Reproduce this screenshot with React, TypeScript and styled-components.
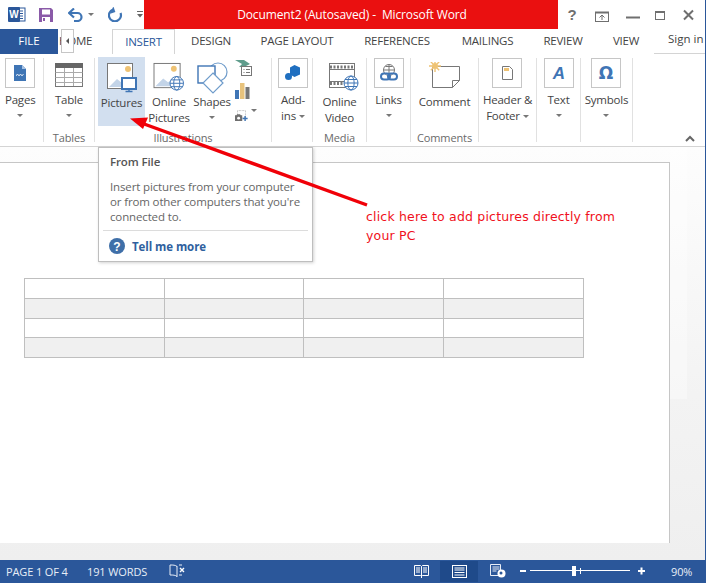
import React from "react";
import styled, { createGlobalStyle } from "styled-components";

const BLUE = "#2b579a";
const ICON_BLUE = "#3f75b5";

const Global = createGlobalStyle`
  html, body { margin: 0; padding: 0; background: #fff; }
  body { font-family: "Open Sans", "Liberation Sans", sans-serif; }
`;

const Frame = styled.div`
  position: relative;
  width: 705px;
  height: 583px;
  border-right: 1px solid ${BLUE};
  display: flex;
  flex-direction: column;
  overflow: hidden;
  background: #fff;
`;

const TitleBar = styled.div`
  height: 29px;
  display: flex;
  flex: none;
`;

const QuickAccess = styled.div`
  width: 144px;
  display: flex;
  align-items: center;
  padding-left: 8px;
  box-sizing: border-box;
`;

const QuickIcon = styled.span<{ $w: number }>`
  width: ${(p) => p.$w}px;
  display: flex;
  align-items: center;
`;

const RedTitle = styled.div`
  width: 414px;
  background: #ea1010;
  color: #fff;
  font-size: 12px;
  letter-spacing: -0.12px;
  white-space: pre;
  display: flex;
  align-items: center;
  justify-content: center;
  padding-left: 2px;
  box-sizing: border-box;
`;

const WindowControls = styled.div`
  flex: 1;
  display: flex;
  align-items: center;
`;

const TabRow = styled.div`
  position: relative;
  height: 25px;
  display: flex;
  flex: none;
  box-sizing: border-box;
  border-bottom: 1px solid #d4d4d4;
`;

const FileTab = styled.div`
  width: 58px;
  height: 25px;
  padding-bottom: 2px;
  box-sizing: border-box;
  background: ${BLUE};
  color: #fff;
  font-size: 11.5px;
  display: flex;
  align-items: center;
  justify-content: center;
`;

const Tab = styled.div<{ $w: number; $active?: boolean }>`
  width: ${(p) => p.$w}px;
  height: 25px;
  padding-bottom: 2px;
  box-sizing: border-box;
  font-size: 11.5px;
  letter-spacing: -0.22px;
  color: ${(p) => (p.$active ? BLUE : "#444")};
  background: #fff;
  display: flex;
  align-items: center;
  justify-content: center;
  ${(p) =>
    p.$active
      ? "border: 1px solid #d4d4d4; border-bottom: none; position: relative; z-index: 1;"
      : ""}
`;

const HomeTab = styled(Tab)`
  justify-content: flex-start;
  padding-left: 1px;
`;

const ScrollButton = styled.div`
  position: absolute;
  left: 61px;
  top: 0;
  width: 13px;
  height: 24px;
  box-sizing: border-box;
  background: #fff;
  border: 1px solid #c6c6c6;
  display: flex;
  align-items: center;
  justify-content: center;
  &::before {
    content: "";
    border-right: 3px solid #555;
    border-top: 3px solid transparent;
    border-bottom: 3px solid transparent;
  }
`;

const SignIn = styled.div`
  margin-left: 14px;
  font-size: 11.5px;
  color: #444;
  white-space: nowrap;
  padding-top: 2px;
`;

const Ribbon = styled.div`
  position: relative;
  height: 93px;
  flex: none;
  box-sizing: border-box;
  border-bottom: 1px solid #d4d4d4;
  display: flex;
  padding-top: 4px;
`;

const Group = styled.div<{ $w: number }>`
  width: ${(p) => p.$w}px;
  height: 84px;
  box-sizing: border-box;
  flex: none;
  display: flex;
  flex-direction: column;
  border-right: 1px solid #e1e1e1;
`;

const GroupBody = styled.div<{ $pad?: number }>`
  height: 73px;
  flex: none;
  display: flex;
  justify-content: ${(p) => (p.$pad !== undefined ? "flex-start" : "center")};
  padding-left: ${(p) => p.$pad ?? 0}px;
`;

const GroupLabel = styled.div`
  height: 11px;
  font-size: 11px;
  line-height: 14px;
  letter-spacing: -0.12px;
  color: #6a6a6a;
  text-align: center;
`;

const RibbonButton = styled.div<{ $w?: number; $on?: boolean }>`
  width: ${(p) => (p.$w ? `${p.$w}px` : "auto")};
  height: 69px;
  margin-top: -1px;
  padding-top: 5px;
  box-sizing: border-box;
  flex: none;
  display: flex;
  flex-direction: column;
  align-items: center;
  background: ${(p) => (p.$on ? "#d2dfef" : "transparent")};
`;

const BoxButton = styled.div`
  display: flex;
  flex-direction: column;
  align-items: center;
`;

const IconBox = styled.div`
  width: 30px;
  height: 30px;
  box-sizing: border-box;
  border: 1px solid #c6c6c6;
  display: flex;
  align-items: center;
  justify-content: center;
  flex: none;
`;

const Label = styled.div<{ $first?: boolean }>`
  font-size: 11.5px;
  line-height: 16px;
  letter-spacing: -0.22px;
  color: #444;
  white-space: nowrap;
  display: flex;
  align-items: center;
  justify-content: center;
  margin-top: ${(p) => (p.$first ? "2px" : "0")};
`;

const BoxLabel = styled(Label)<{ $first?: boolean }>`
  margin-top: ${(p) => (p.$first ? "4px" : "0")};
`;

const Caret = styled.span<{ $inline?: boolean }>`
  display: block;
  width: 0;
  height: 0;
  border-left: 3px solid transparent;
  border-right: 3px solid transparent;
  border-top: 3px solid #777;
  margin: ${(p) => (p.$inline ? "1px 0 0 3px" : "6px 0 0 0")};
`;

const SmallStack = styled.div`
  width: 22px;
  margin-left: 4px;
  display: flex;
  flex-direction: column;
  gap: 6px;
  padding-top: 2px;
`;

const CameraRow = styled.div`
  display: flex;
  align-items: flex-start;
  margin-top: 3px;
`;

const Collapse = styled.div`
  position: absolute;
  right: 10px;
  bottom: 4px;
  line-height: 0;
`;

const DocArea = styled.div`
  flex: 1;
  min-height: 0;
  background: linear-gradient(#fdfdfd, #f3f3f3 60%, #efefef);
  padding-top: 15px;
  display: flex;
  flex-direction: column;
  box-sizing: border-box;
`;

const Page = styled.div`
  width: 670px;
  height: 381px;
  box-sizing: border-box;
  background: #fff;
  border-top: 1px solid #c6c6c6;
  border-right: 1px solid #c6c6c6;
  padding: 115px 0 0 24px;
`;

const ScrollThumb = styled.div`
  position: absolute;
  left: 670px;
  top: 147px;
  width: 17px;
  height: 252px;
  background: rgba(255, 255, 255, 0.35);
`;

const DocTable = styled.table`
  border-collapse: collapse;
  table-layout: fixed;
  width: 559px;
`;

const DocCol = styled.col<{ $w: number }>`
  width: ${(p) => p.$w}px;
`;

const DocRow = styled.tr<{ $band?: boolean }>`
  background: ${(p) => (p.$band ? "#f0f0f0" : "#fff")};
`;

const DocCell = styled.td`
  border: 1px solid #bfbfbf;
  height: 18.8px;
  padding: 0;
`;

const StatusBar = styled.div`
  height: 23px;
  flex: none;
  background: ${BLUE};
  color: #e8eef7;
  font-size: 11px;
  letter-spacing: -0.12px;
  display: flex;
  align-items: center;
  padding-left: 6px;
  padding-bottom: 1px;
  box-sizing: border-box;
`;

const StatusText = styled.span<{ $w: number }>`
  width: ${(p) => p.$w}px;
  white-space: nowrap;
`;

const StatusRight = styled.div`
  margin-left: auto;
  display: flex;
  align-items: center;
  height: 100%;
`;

const ViewButton = styled.div<{ $w: number; $on?: boolean }>`
  width: ${(p) => p.$w}px;
  height: 21px;
  display: flex;
  align-items: center;
  justify-content: center;
  background: ${(p) => (p.$on ? "#1f4a8a" : "transparent")};
`;

const Zoomer = styled.div`
  width: 138px;
  margin-left: 3px;
  line-height: 0;
`;

const ZoomValue = styled.span`
  width: 47px;
  padding-left: 13px;
  box-sizing: border-box;
`;

const Tooltip = styled.div`
  position: absolute;
  left: 98px;
  top: 147px;
  width: 215px;
  height: 115px;
  box-sizing: border-box;
  background: #fff;
  border: 1px solid #bebebe;
  box-shadow: 1px 1px 3px rgba(0, 0, 0, 0.18);
  padding: 6px 4px 0;
`;

const TipTitle = styled.div`
  font-size: 11.5px;
  font-weight: 600;
  letter-spacing: -0.12px;
  line-height: 16px;
  color: #555;
  padding-left: 7px;
`;

const TipBody = styled.div`
  margin-top: 9px;
  padding-left: 7px;
  font-size: 11.5px;
  letter-spacing: -0.14px;
  line-height: 15px;
  color: #666;
  white-space: nowrap;
`;

const TipMore = styled.div`
  margin-top: 6px;
  padding: 7px 0 0 6px;
  border-top: 1px solid #dcdcdc;
  display: flex;
  align-items: center;
  gap: 7px;
  font-size: 11.5px;
  font-weight: 700;
  letter-spacing: -0.08px;
  color: #2f5f9e;
`;

const ArrowLayer = styled.svg`
  position: absolute;
  left: 0;
  top: 0;
  pointer-events: none;
`;

const Note = styled.div`
  position: absolute;
  left: 366px;
  top: 207px;
  font-family: "DejaVu Sans", sans-serif;
  font-size: 12.5px;
  line-height: 19px;
  letter-spacing: 0.18px;
  color: #f01020;
  white-space: nowrap;
`;

const WordIcon = () => (
  <svg width="18" height="17" viewBox="0 0 18 17">
    <rect x="7" y="2" width="10" height="13" fill="#fff" stroke="#2b579a" />
    <path d="M10 5h5M10 7.5h5M10 10h5M10 12.5h5" stroke="#2b579a" />
    <rect x="0" y="1" width="12" height="15" rx="1" fill="#2b579a" />
    <text x="6" y="12" fontSize="10" fontWeight="700" fill="#fff" textAnchor="middle" fontFamily="Liberation Sans">W</text>
  </svg>
);

const SaveIcon = () => (
  <svg width="16" height="16" viewBox="0 0 16 16">
    <path d="M1 1h12l2 2v12H1z" fill="#8a5aa8" />
    <rect x="4" y="2.5" width="8" height="5" fill="#fff" />
    <rect x="4" y="10" width="8" height="5" fill="#fff" />
    <rect x="5" y="11" width="2" height="3" fill="#8a5aa8" />
  </svg>
);

const UndoIcon = () => (
  <svg width="15" height="14" viewBox="0 0 15 14">
    <path d="M2 5h7.5a4 4 0 0 1 0 8H6" fill="none" stroke="#3f75b5" strokeWidth="2.2" />
    <path d="M6 0.5 1 5l5 4.5" fill="none" stroke="#3f75b5" strokeWidth="2.2" />
  </svg>
);

const RedoIcon = () => (
  <svg width="15" height="15" viewBox="0 0 15 15">
    <path d="M5 2.6A6 6 0 1 0 12.5 6" fill="none" stroke="#3f75b5" strokeWidth="2.2" />
    <path d="M6.5 0v6H1z" fill="#3f75b5" transform="rotate(-20 4 3)" />
  </svg>
);

const TinyCaret = () => (
  <svg width="6" height="4" viewBox="0 0 6 4">
    <path d="M0 0h6L3 3z" fill="#777" />
  </svg>
);

const CustomizeIcon = () => (
  <svg width="6" height="7" viewBox="0 0 6 7">
    <path d="M0 0.5h6" stroke="#666" />
    <path d="M0 3h6L3 6.5z" fill="#666" />
  </svg>
);

const WindowButtons = () => (
  <svg width="147" height="29" viewBox="0 0 147 29">
    <text x="14" y="20" fontSize="15" fontWeight="700" fill="#6f6f6f" textAnchor="middle" fontFamily="Liberation Sans">?</text>
    <rect x="37.5" y="12.5" width="13" height="9" fill="none" stroke="#6f6f6f" />
    <path d="M37 12.5h14" stroke="#6f6f6f" strokeWidth="2" />
    <path d="M44 20v-5M41.5 17.5 44 15l2.5 2.5" fill="none" stroke="#6f6f6f" />
    <path d="M68 17.5h14" stroke="#6f6f6f" strokeWidth="2" />
    <rect x="97.5" y="11.5" width="9" height="8" fill="none" stroke="#6f6f6f" />
    <rect x="97" y="11" width="10" height="2" fill="#6f6f6f" />
    <path d="M126 10.5l9 9M135 10.5l-9 9" stroke="#6f6f6f" strokeWidth="2" />
  </svg>
);

const PagesIcon = () => (
  <svg width="12" height="16" viewBox="0 0 12 16">
    <path d="M0 0h8l4 4v12H0z" fill="#3f75b5" />
    <path d="M8 0v4h4z" fill="#a9c4e4" />
    <path d="M2 10.5l1.5-1 1.5 1 1.5-1 1.5 1 1.5-1" fill="none" stroke="#fff" />
  </svg>
);

const TableIcon = () => (
  <svg width="28" height="26" viewBox="0 0 28 26">
    <rect x="0.5" y="1.5" width="27" height="23" fill="#fff" stroke="#777" />
    <rect x="0" y="1" width="28" height="5" fill="#666" />
    <path d="M.5 10.5h27M.5 15.5h27M.5 20.5h27M9.5 6v18M18.5 6v18" stroke="#aaa" />
  </svg>
);

const Photo = ({ w = 25 }: { w?: number }) => (
  <>
    <rect x="0.5" y="1.5" width={w} height="25" fill="#fff" stroke="#777" />
    <circle cx="21" cy="7" r="3" fill="#eec273" />
    <path d="M2 25l8-8 5 4 3-2 5 6z" fill="#c3d4e8" />
  </>
);

const PicturesIcon = () => (
  <svg width="30" height="31" viewBox="0 0 30 31">
    <Photo />
    <rect x="15" y="16" width="14" height="11" fill="#fff" stroke="#3f75b5" strokeWidth="2" />
    <path d="M22 27v2M18.5 29.5h7" stroke="#3f75b5" strokeWidth="1.4" />
  </svg>
);

const Globe = ({ cx, cy, r = 7 }: { cx: number; cy: number; r?: number }) => (
  <g fill="#fff" stroke={ICON_BLUE}>
    <circle cx={cx} cy={cy} r={r} />
    <ellipse cx={cx} cy={cy} rx={r * 0.45} ry={r} fill="none" />
    <path d={`M${cx - r} ${cy}h${r * 2}M${cx - r + 1} ${cy - 3.5}h${r * 2 - 2}M${cx - r + 1} ${cy + 3.5}h${r * 2 - 2}`} fill="none" />
  </g>
);

const OnlinePicturesIcon = () => (
  <svg width="32" height="31" viewBox="0 0 32 31">
    <Photo w={27} />
    <Globe cx={24} cy={22} />
  </svg>
);

const ShapesIcon = () => (
  <svg width="32" height="32" viewBox="-1 0 32 32">
    <circle cx="21" cy="10" r="9" fill="none" stroke="#6f9ccb" strokeWidth="1.2" />
    <rect x="1" y="4" width="17" height="17" fill="#fff" stroke={ICON_BLUE} strokeWidth="1.4" />
    <path d="M16 11 26 21 16 31 6 21z" fill="#fff" stroke="#6f9ccb" strokeWidth="1.2" />
  </svg>
);

const SmartArtIcon = () => (
  <svg width="17" height="17" viewBox="0 0 17 17">
    <path d="M0 0h9l6 4-6 3H4l3-3z" fill="#5f9c8c" />
    <rect x="6.5" y="6.5" width="10" height="9" fill="#fff" stroke="#777" />
    <path d="M8.5 9.5h1M11 9.5h4M8.5 12.5h1M11 12.5h4" stroke="#777" />
  </svg>
);

const ChartIcon = () => (
  <svg width="15" height="16" viewBox="0 0 15 16">
    <rect x="0" y="7" width="4" height="9" fill={ICON_BLUE} />
    <rect x="5" y="0" width="4.5" height="16" fill="#e8c37d" />
    <rect x="10.5" y="4" width="4" height="12" fill="#777" />
  </svg>
);

const ScreenshotIcon = () => (
  <svg width="18" height="16" viewBox="0 0 18 16">
    <rect x="3.5" y="0.5" width="11" height="10" fill="none" stroke="#999" strokeDasharray="1 1" />
    <path d="M0 7h2l1-1.5h4L8 7h2v8H0z" fill="#6f6f6f" />
    <circle cx="5" cy="11" r="2" fill="#fff" />
    <path d="M14 8v7M10.5 11.5h7" stroke={ICON_BLUE} strokeWidth="2" />
  </svg>
);

const AddInsIcon = () => (
  <svg width="16" height="16" viewBox="0 0 16 16">
    <path d="M9.5 0 15 2.5v7L9.5 12 5 9.5v-7z" fill="#1f6fc0" />
    <circle cx="3.5" cy="11.5" r="3.5" fill="#1f6fc0" />
  </svg>
);

const VideoIcon = () => (
  <svg width="38" height="30" viewBox="-8 0 38 30">
    <rect x="0.5" y="1.5" width="25" height="24" fill="#fff" stroke="#777" />
    <path d="M1 5h25M1 21.5h25" stroke="#777" strokeWidth="3" strokeDasharray="2 1.5" />
    <path d="M1 7.5h25M1 19.5h25" stroke="#777" />
    <Globe cx={22} cy={21} />
  </svg>
);

const LinksIcon = () => (
  <svg width="18" height="18" viewBox="0 0 18 18">
    <circle cx="9" cy="6" r="5.5" fill="#fff" stroke="#777" />
    <path d="M3.5 6h11M9 .5v10M5.5 2.5h7" stroke="#777" />
    <rect x="1" y="9.5" width="9" height="6" rx="3" fill="none" stroke="#3f75b5" strokeWidth="2" />
    <rect x="8" y="9.5" width="9" height="6" rx="3" fill="none" stroke="#3f75b5" strokeWidth="2" />
  </svg>
);

const CommentIcon = () => (
  <svg width="32" height="32" viewBox="0 2 32 32">
    <path d="M3.5 6.5h27v14l-7 7h-20z" fill="#fff" stroke="#777" />
    <path d="M23.5 27.5v-7h7" fill="none" stroke="#777" />
    <circle cx="6" cy="6" r="3" fill="#f4cf8a" />
    <path d="M6 0v12M0 6h12M1.8 1.8l8.4 8.4M10.2 1.8l-8.4 8.4" stroke="#eec273" strokeWidth="1.4" />
  </svg>
);

const HeaderIcon = () => (
  <svg width="11" height="14" viewBox="0 0 11 14">
    <path d="M.5.5h7l3 3v10H.5z" fill="#fff" stroke="#777" />
    <rect x="2" y="2" width="5" height="3" fill="#eec273" />
  </svg>
);

const TextIcon = () => (
  <svg width="18" height="18" viewBox="0 0 18 18">
    <text x="9" y="15" fontSize="17" fontWeight="700" fontStyle="italic" fill={ICON_BLUE} textAnchor="middle" fontFamily="Liberation Sans">A</text>
  </svg>
);

const OmegaIcon = () => (
  <svg width="22" height="22" viewBox="0 0 22 22">
    <text x="11" y="17" fontSize="17" fontWeight="700" fill={ICON_BLUE} textAnchor="middle" fontFamily="DejaVu Sans">Ω</text>
  </svg>
);

const ChevronUp = () => (
  <svg width="10" height="7" viewBox="0 0 10 7">
    <path d="M1 6l4-4 4 4" fill="none" stroke="#666" strokeWidth="2" />
  </svg>
);

const HelpIcon = () => (
  <svg width="16" height="16" viewBox="0 0 16 16">
    <circle cx="8" cy="8" r="8" fill="#3f6fa8" />
    <text x="8" y="12.5" fontSize="12" fontWeight="700" fill="#fff" textAnchor="middle" fontFamily="Liberation Sans">?</text>
  </svg>
);

const ProofIcon = () => (
  <svg width="16" height="14" viewBox="0 0 16 14">
    <path d="M8 2.5C6.5 1 4 1 1 1v10c3 0 5.5 0 7 1.5" fill="none" stroke="#e8eef7" />
    <path d="M8 2v11" stroke="#e8eef7" />
    <path d="M10 1h3M10 11h3" stroke="#e8eef7" />
    <path d="M11 4l4 4M15 4l-4 4" stroke="#fff" strokeWidth="1.4" />
  </svg>
);

const ReadIcon = () => (
  <svg width="15" height="14" viewBox="0 0 15 14">
    <path d="M.5 1.5h6L7.5 2.5l1-1h6v10h-6l-1 1-1-1h-6z" fill="none" stroke="#fff" />
    <path d="M2 4h4M2 6h4M2 8h4M9 4h4M9 6h4M9 8h4M7.5 2.5V14" stroke="#fff" />
  </svg>
);

const PrintIcon = () => (
  <svg width="15" height="13" viewBox="0 0 15 13">
    <rect x=".5" y=".5" width="14" height="12" fill="none" stroke="#fff" />
    <path d="M2.5 3h10M2.5 5h10M2.5 7.5h10M2.5 10h10" stroke="#fff" />
  </svg>
);

const WebIcon = () => (
  <svg width="16" height="14" viewBox="0 0 16 14">
    <path d="M.5.5h10v11H.5z" fill="none" stroke="#e8eef7" />
    <path d="M2.5 3h7M2.5 5h7M2.5 7h4" stroke="#e8eef7" />
    <circle cx="11.5" cy="9.5" r="4" fill="#fff" />
    <circle cx="11" cy="9" r="1.5" fill="#2b579a" />
  </svg>
);

const ZoomSlider = () => (
  <svg width="138" height="14" viewBox="0 0 138 14">
    <path d="M0 7h6" stroke="#fff" strokeWidth="2" />
    <path d="M10 6.5h100" stroke="#fff" />
    <rect x="52" y="2" width="4" height="10" fill="#fff" />
    <path d="M60.5 4v6" stroke="#fff" />
    <path d="M118 7h7M121.5 3.5v7" stroke="#fff" strokeWidth="2" />
  </svg>
);

const rows = [false, true, false, true];

export default function App() {
  return (
    <>
      <Global />
      <Frame>
        <TitleBar>
          <QuickAccess>
            <QuickIcon $w={30}><WordIcon /></QuickIcon>
            <QuickIcon $w={30}><SaveIcon /></QuickIcon>
            <QuickIcon $w={20}><UndoIcon /></QuickIcon>
            <QuickIcon $w={20}><TinyCaret /></QuickIcon>
            <QuickIcon $w={29}><RedoIcon /></QuickIcon>
            <QuickIcon $w={6}><CustomizeIcon /></QuickIcon>
          </QuickAccess>
          <RedTitle>{"Document2 (Autosaved) -  Microsoft Word"}</RedTitle>
          <WindowControls><WindowButtons /></WindowControls>
        </TitleBar>

        <TabRow>
          <FileTab>FILE</FileTab>
          <HomeTab $w={54}>HOME</HomeTab>
          <ScrollButton />
          <Tab $w={63} $active>INSERT</Tab>
          <Tab $w={72}>DESIGN</Tab>
          <Tab $w={100}>PAGE LAYOUT</Tab>
          <Tab $w={100}>REFERENCES</Tab>
          <Tab $w={81}>MAILINGS</Tab>
          <Tab $w={70}>REVIEW</Tab>
          <Tab $w={56}>VIEW</Tab>
          <SignIn>Sign in</SignIn>
        </TabRow>

        <Ribbon>
          <Group $w={44}>
            <GroupBody $pad={5}>
              <BoxButton>
                <IconBox><PagesIcon /></IconBox>
                <BoxLabel $first>Pages</BoxLabel>
                <Caret />
              </BoxButton>
            </GroupBody>
            <GroupLabel>&nbsp;</GroupLabel>
          </Group>
          <Group $w={51}>
            <GroupBody>
              <RibbonButton>
                <TableIcon />
                <BoxLabel $first>Table</BoxLabel>
                <Caret />
              </RibbonButton>
            </GroupBody>
            <GroupLabel>Tables</GroupLabel>
          </Group>
          <Group $w={177}>
            <GroupBody $pad={3}>
              <RibbonButton $w={47} $on>
                <PicturesIcon />
                <Label $first>Pictures</Label>
              </RibbonButton>
              <RibbonButton $w={48}>
                <OnlinePicturesIcon />
                <Label $first>Online</Label>
                <Label>Pictures</Label>
              </RibbonButton>
              <RibbonButton $w={38}>
                <ShapesIcon />
                <Label>Shapes</Label>
                <Caret />
              </RibbonButton>
              <SmallStack>
                <SmartArtIcon />
                <ChartIcon />
                <CameraRow>
                  <ScreenshotIcon />
                  <Caret $inline />
                </CameraRow>
              </SmallStack>
            </GroupBody>
            <GroupLabel>Illustrations</GroupLabel>
          </Group>
          <Group $w={41}>
            <GroupBody $pad={6}>
              <BoxButton>
                <IconBox><AddInsIcon /></IconBox>
                <BoxLabel $first>Add-</BoxLabel>
                <BoxLabel>ins<Caret $inline /></BoxLabel>
              </BoxButton>
            </GroupBody>
            <GroupLabel>&nbsp;</GroupLabel>
          </Group>
          <Group $w={54}>
            <GroupBody>
              <RibbonButton>
                <VideoIcon />
                <Label $first>Online</Label>
                <Label>Video</Label>
              </RibbonButton>
            </GroupBody>
            <GroupLabel>Media</GroupLabel>
          </Group>
          <Group $w={44}>
            <GroupBody>
              <BoxButton>
                <IconBox><LinksIcon /></IconBox>
                <BoxLabel $first>Links</BoxLabel>
                <Caret />
              </BoxButton>
            </GroupBody>
            <GroupLabel>&nbsp;</GroupLabel>
          </Group>
          <Group $w={68}>
            <GroupBody>
              <RibbonButton>
                <CommentIcon />
                <Label>Comment</Label>
              </RibbonButton>
            </GroupBody>
            <GroupLabel>Comments</GroupLabel>
          </Group>
          <Group $w={58}>
            <GroupBody>
              <BoxButton>
                <IconBox><HeaderIcon /></IconBox>
                <BoxLabel $first>Header &amp;</BoxLabel>
                <BoxLabel>Footer<Caret $inline /></BoxLabel>
              </BoxButton>
            </GroupBody>
            <GroupLabel>&nbsp;</GroupLabel>
          </Group>
          <Group $w={44}>
            <GroupBody>
              <BoxButton>
                <IconBox><TextIcon /></IconBox>
                <BoxLabel $first>Text</BoxLabel>
                <Caret />
              </BoxButton>
            </GroupBody>
            <GroupLabel>&nbsp;</GroupLabel>
          </Group>
          <Group $w={52}>
            <GroupBody>
              <BoxButton>
                <IconBox><OmegaIcon /></IconBox>
                <BoxLabel $first>Symbols</BoxLabel>
                <Caret />
              </BoxButton>
            </GroupBody>
            <GroupLabel>&nbsp;</GroupLabel>
          </Group>
          <Collapse><ChevronUp /></Collapse>
        </Ribbon>

        <DocArea>
          <Page>
            <DocTable>
              <colgroup>
                <DocCol $w={140} />
                <DocCol $w={139} />
                <DocCol $w={140} />
                <DocCol $w={140} />
              </colgroup>
              <tbody>
                {rows.map((band, i) => (
                  <DocRow key={i} $band={band}>
                    <DocCell /><DocCell /><DocCell /><DocCell />
                  </DocRow>
                ))}
              </tbody>
            </DocTable>
          </Page>
        </DocArea>
        <ScrollThumb />

        <StatusBar>
          <StatusText $w={81}>PAGE 1 OF 4</StatusText>
          <StatusText $w={82}>191 WORDS</StatusText>
          <ProofIcon />
          <StatusRight>
            <ViewButton $w={38}><ReadIcon /></ViewButton>
            <ViewButton $w={38} $on><PrintIcon /></ViewButton>
            <ViewButton $w={39}><WebIcon /></ViewButton>
            <Zoomer><ZoomSlider /></Zoomer>
            <ZoomValue>90%</ZoomValue>
          </StatusRight>
        </StatusBar>

        <Tooltip>
          <TipTitle>From File</TipTitle>
          <TipBody>
            Insert pictures from your computer<br />
            or from other computers that you're<br />
            connected to.
          </TipBody>
          <TipMore><HelpIcon />Tell me more</TipMore>
        </Tooltip>

        <ArrowLayer width="705" height="583" viewBox="0 0 705 583">
          <path d="M367 205 140 122.5" stroke="#f00008" strokeWidth="3.4" />
          <path d="M130 118.5 148 117.5 143 129z" fill="#f00008" />
        </ArrowLayer>

        <Note>
          click here to add pictures directly from<br />
          your PC
        </Note>
      </Frame>
    </>
  );
}
